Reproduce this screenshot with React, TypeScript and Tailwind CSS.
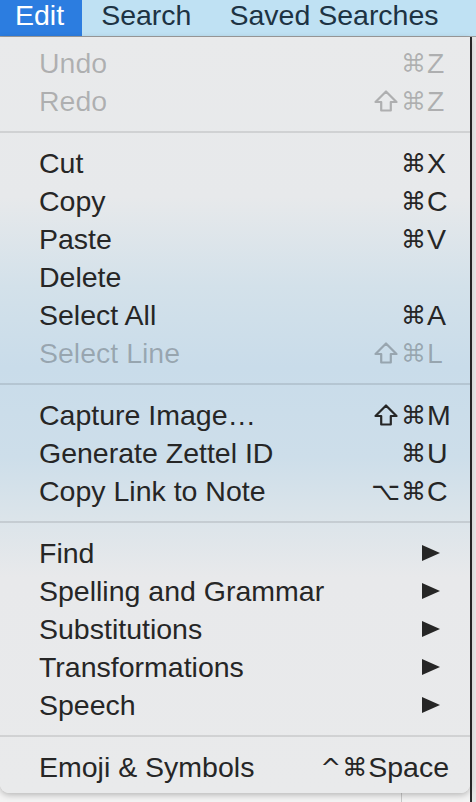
const font = "font-['Liberation_Sans','Helvetica','Arial',sans-serif]";
const sym = "font-['DejaVu_Sans','Liberation_Sans',sans-serif]";

type Item = {
  label: string;
  shift?: boolean;
  mods?: string;
  keyName?: string;
  disabled?: boolean;
  submenu?: boolean;
  wide?: boolean;
};

const groups: Item[][] = [
  [
    { label: "Undo", mods: "⌘", keyName: "Z", disabled: true },
    { label: "Redo", shift: true, mods: "⌘", keyName: "Z", disabled: true },
  ],
  [
    { label: "Cut", mods: "⌘", keyName: "X" },
    { label: "Copy", mods: "⌘", keyName: "C" },
    { label: "Paste", mods: "⌘", keyName: "V" },
    { label: "Delete" },
    { label: "Select All", mods: "⌘", keyName: "A" },
    { label: "Select Line", shift: true, mods: "⌘", keyName: "L", disabled: true },
  ],
  [
    { label: "Capture Image…", shift: true, mods: "⌘", keyName: "M" },
    { label: "Generate Zettel ID", mods: "⌘", keyName: "U" },
    { label: "Copy Link to Note", mods: "⌥⌘", keyName: "C" },
  ],
  [
    { label: "Find", submenu: true },
    { label: "Spelling and Grammar", submenu: true },
    { label: "Substitutions", submenu: true },
    { label: "Transformations", submenu: true },
    { label: "Speech", submenu: true },
  ],
  [{ label: "Emoji & Symbols", mods: "^⌘", keyName: "Space", wide: true }],
];

function ShiftIcon() {
  return (
    <svg width="24" height="22" viewBox="0 0 24 22" className="mr-[3px]">
      <path
        d="M12 1.5 L22.5 12 H16.8 V20.5 H7.2 V12 H1.5 Z"
        fill="none"
        stroke="currentColor"
        strokeWidth="2.2"
        strokeLinejoin="round"
      />
    </svg>
  );
}

function Row({ item }: { item: Item }) {
  const color = item.disabled ? "text-black/25" : "text-[#262626]";
  return (
    <div className={`flex items-center h-[38px] pl-[39px] pr-[21px] ${color}`}>
      <span className="flex-1 whitespace-nowrap leading-none">{item.label}</span>
      {item.submenu && (
        <svg width="18" height="16" viewBox="0 0 18 16" className="mr-[9px]">
          <polygon points="0,0 18,8 0,16" fill="#262626" />
        </svg>
      )}
      {item.keyName && (
        <span className="flex items-center leading-none">
          {item.shift && <ShiftIcon />}
          <span className={`${sym} text-[25px] tracking-[1px]`}>{item.mods}</span>
          <span className={item.wide ? "" : "w-[22px] text-left"}>{item.keyName}</span>
        </span>
      )}
    </div>
  );
}

export default function App() {
  return (
    <div className={`w-[476px] h-[802px] overflow-hidden bg-[#f3f3f3] ${font} text-[28.5px]`}>
      {/* menu bar */}
      <div className="flex h-[37px] bg-[#bfe1f3] border-b border-[#9e9e9e] text-[#1d3343] leading-none whitespace-nowrap">
        <div className="flex items-center pl-[15px] pr-[18px] pb-[5px] bg-[#2c7de0] text-white">Edit</div>
        <div className="flex items-center px-[19px] pb-[5px]">Search</div>
        <div className="flex items-center px-[19px] pb-[5px]">Saved Searches</div>
        <div className="flex items-center px-[19px] pb-[5px]">Help</div>
      </div>

      <div className="relative flex h-[765px]">
        {/* window behind the menu */}
        <div className="w-[402px] border-r border-[#c8c8c8]" />
        <div className="w-[68px]" />
        <div className="flex-1 border-l-2 border-[#2a2a2a] bg-[#e6e6e6]" />

        {/* dropdown */}
        <div className="absolute left-0 top-0 w-[470px] rounded-b-[9px] shadow-[0_2px_6px_rgba(0,0,0,0.25)] bg-[linear-gradient(180deg,#e9eaeb_0px,#e7e9eb_160px,#d3e1ea_250px,#c9dcea_330px,#cddeea_420px,#dbe4ea_480px,#e8e9eb_540px,#e9eaeb_100%)] py-[7px]">
          {groups.map((g, gi) => (
            <div key={gi}>
              {gi > 0 && (
                <div className="h-[24px] flex items-center">
                  <div className="h-[2px] w-full bg-black/10" />
                </div>
              )}
              {g.map((item) => (
                <Row key={item.label} item={item} />
              ))}
            </div>
          ))}
        </div>
      </div>
    </div>
  );
}
